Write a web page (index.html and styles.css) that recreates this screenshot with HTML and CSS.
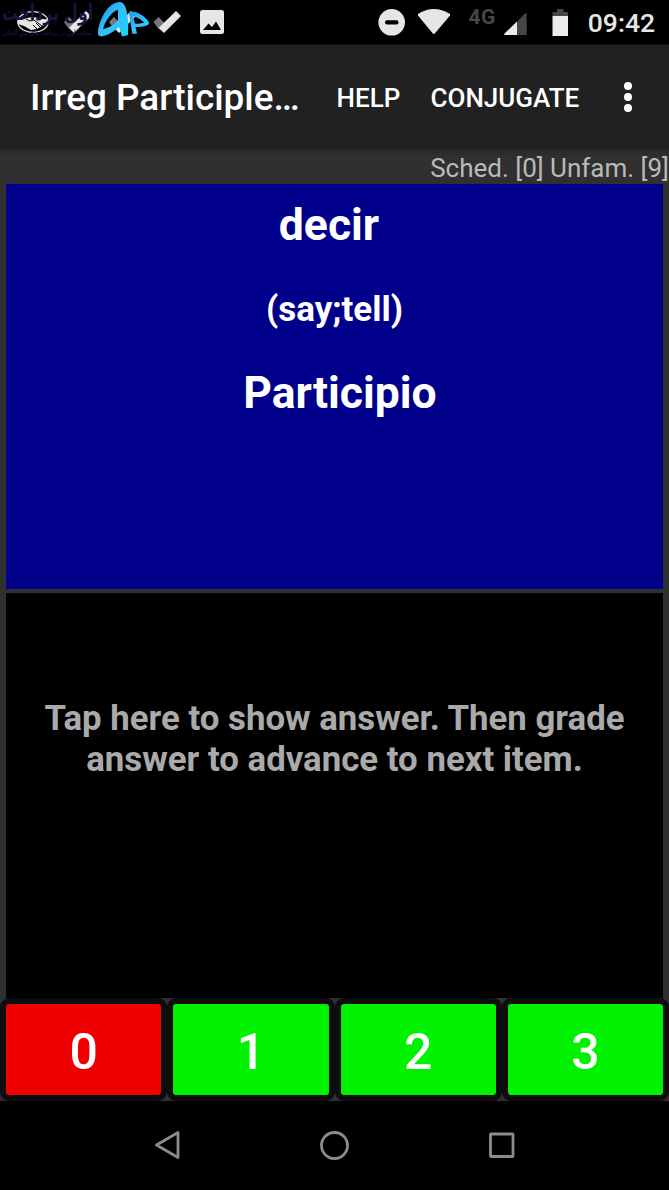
FILE: index.html
```
<!DOCTYPE html>
<html lang="en">
<head>
	<meta charset="UTF-8">
	<title>Irreg Participle</title>
	<link rel="stylesheet" href="styles.css">
</head>
<body>
	<div id="status">
		<svg class="icons" width="669" height="44" viewBox="0 0 669 44">
			<!-- handshake -->
			<ellipse cx="33" cy="22" rx="15.2" ry="10.3" fill="none" stroke="#e6e6e6" stroke-width="1.3"/>
			<path d="M18 19 Q23 20 27 18 L32 17 L39 18 Q44 20 48 19 L48 24 L42 26 L37 29 L31 30 L24 26 L18 24Z" fill="#e6e6e6"/>
			<path d="M26 19 L30 21 L34 20 L42 26 M33 25 L37 29 M36 23 L40 27" fill="none" stroke="#000" stroke-width="1"/>
			<!-- checks -->
			<g id="checks">
				<path d="M64 22 L69 17 L75 23 L69 29Z" fill="#777"/>
				<path d="M69 28 L86 11 L91 16 L74 33Z" fill="#e6e6e6"/>
				<path d="M109 22 L114 17 L120 23 L114 29Z" fill="#777"/>
				<path d="M114 28 L131 11 L136 16 L119 33Z" fill="#e6e6e6"/>
				<path d="M153.500 22 L158.500 17 L164.500 23 L158.500 29Z" fill="#777"/>
				<path d="M158.500 28 L176 11 L181 16 L164 33Z" fill="#e6e6e6"/>
			</g>
			<!-- picture -->
			<rect x="200" y="10" width="24" height="24" rx="2.500" fill="#e6e6e6"/>
			<path d="M203 30 L208.500 23.500 L212 27 L216 21.500 L221 30Z" fill="#000"/>
			<!-- do not disturb -->
			<circle cx="391.700" cy="22.300" r="13.300" fill="#e6e6e6"/>
			<rect x="385" y="20.300" width="13.500" height="4.200" rx="2" fill="#000"/>
			<!-- wifi -->
			<path d="M418 14 Q433.800 4 450 14 L450 15.500 L435 33.300 Q433.800 34.700 432.600 33.300 L418 15.500Z" fill="#e6e6e6"/>
			<!-- signal -->
			<path d="M525.500 13 Q526.700 12.500 526.700 14 V35 H517 V21.500Z" fill="#464646"/>
			<path d="M517 21.500 V35 H505 Q503.500 34.500 504.500 33.500Z" fill="#ececec"/>
			<!-- battery -->
			<path d="M552.500 16 V12 H557 V9 H563.500 V12 H568 V16Z" fill="#464646"/>
			<rect x="552.500" y="16" width="15.500" height="20" fill="#ececec"/>
			<!-- watermark -->
			<g class="mark" lang="fa">
				<text x="2" y="20" font-size="22" textLength="91" lengthAdjust="spacingAndGlyphs">اول پرداخت</text>
				<text x="2" y="34.500" font-size="7" textLength="91" lengthAdjust="spacingAndGlyphs">انتخاب اول در پرداخت های بین المللی</text>
			</g>
		</svg>
		<svg class="mark-logo" width="56" height="38" viewBox="96 1 56 38">
			<defs>
				<linearGradient id="blue" x1="0" y1="0" x2="1" y2="1">
					<stop offset="0" stop-color="#159bf0"/>
					<stop offset="0.500" stop-color="#35bdfa"/>
					<stop offset="1" stop-color="#19d7ff"/>
				</linearGradient>
			</defs>
			<path fill="url(#blue)" fill-rule="evenodd" d="M98 32 C99 20 108 2 120 2 C126 2.500 127 12 128 20 C128.500 27 128 31 128 35 L122 36.500 L119 27 C114 31 108 36 101 36.500 Q97.500 36 98 32Z M103 29 C109 28 115 24 118 20 L118 10 C112 11 105 21 103 29Z"/>
			<path fill="url(#blue)" fill-rule="evenodd" d="M129 13 C131 9 144 14 149 22.500 C150 26 142 27 135.500 27 L137 33.500 L132.500 34 C131 28 130 19 129 13Z M133 16.500 L135 23.500 C139 24 142 23.500 144 22.500 C141 19 137 17 133 16.500Z"/>
		</svg>
		<span class="net">4G</span>
		<span class="time">09:42</span>
	</div>
	<div id="bar">
		<h1>Irreg Participle…</h1>
		<a class="help">HELP</a>
		<a class="conj">CONJUGATE</a>
		<svg class="more" width="10" height="32" viewBox="0 0 10 32">
			<circle cx="5" cy="5" r="4"/>
			<circle cx="5" cy="16" r="4"/>
			<circle cx="5" cy="27" r="4"/>
		</svg>
	</div>
	<div id="main">
		<div class="sched">Sched. [0] Unfam. [9]</div>
		<div class="card question">
			<p class="verb">decir&nbsp;</p>
			<p class="meaning">(say;tell)</p>
			<p class="tense">&nbsp;Participio</p>
		</div>
		<div class="card answer">
			<p>Tap here to show answer. Then grade<br>answer to advance to next item.</p>
		</div>
		<div id="grades">
			<button class="wrong">0</button>
			<button>1</button>
			<button>2</button>
			<button>3</button>
		</div>
	</div>
	<div id="nav">
		<svg width="30" height="32" viewBox="0 0 30 32"><path d="M4.500 16 L26 3.500 V28.500Z"/></svg>
		<svg width="30" height="32" viewBox="0 0 30 32"><circle cx="15.500" cy="16.500" r="13"/></svg>
		<svg width="30" height="32" viewBox="0 0 30 32"><rect x="3.500" y="5" width="22.500" height="22.500" rx="0.500"/></svg>
	</div>
</body>
</html>
```
FILE: styles.css
```
*{
	margin: 0;
	padding: 0;
	box-sizing: border-box;
}
body{
	width: 669px;
	height: 1190px;
	background: #000;
	color: #fff;
	font-family: Roboto, "Noto Sans", sans-serif;
	overflow: hidden;
}
#status{
	position: relative;
	height: 45px;
	background: #000;
	display: flex;
	justify-content: flex-end;
	border-bottom: 1px solid #111;
}
#status .icons{
	position: absolute;
	left: 0;
	top: 0;
}
.mark{
	fill: #15153f;
	font-family: "DejaVu Sans", sans-serif;
	font-weight: 700;
}
.mark-logo{
	position: absolute;
	left: 96px;
	top: 1px;
}
.net{
	color: #464646;
	font-size: 21px;
	font-weight: 700;
	line-height: 34px;
	letter-spacing: 0.5px;
	margin-right: 92px;
}
.time{
	color: #e6e6e6;
	font-size: 26.5px;
	font-weight: 500;
	line-height: 46px;
	margin-right: 14px;
}
#bar{
	position: relative;
	height: 104px;
	padding: 0 36px 0 30px;
	display: flex;
	align-items: center;
	background: #212121;
	box-shadow: 0 1px 6px rgba(0,0,0,0.4);
}
#bar h1{
	width: 306.5px;
	font-size: 36.9px;
	font-weight: 500;
	line-height: 104px;
	white-space: nowrap;
	padding-top: 2px;
}
#bar a{
	font-size: 26px;
	font-weight: 500;
	white-space: nowrap;
	padding-top: 2px;
}
#bar .help{
	width: 94px;
}
#bar .more{
	margin-left: auto;
	fill: #fff;
}
#main{
	height: 952px;
	background: #303030;
}
.sched{
	height: 35px;
	color: #bababa;
	font-size: 26px;
	line-height: 38px;
	text-align: right;
}
.card{
	height: 405px;
	margin: 0 6px;
	text-align: center;
	font-weight: 700;
}
.question{
	background: #00008b;
	padding-top: 13px;
	margin-bottom: 4px;
}
.question p{
	line-height: 56px;
	margin-bottom: 28px;
}
.verb, .tense{
	font-size: 44.5px;
}
.question .meaning{
	font-size: 35px;
	padding-top: 1px;
	margin-bottom: 27px;
}
.answer{
	background: #000;
	color: #aaa;
	padding-top: 105px;
	font-size: 34.8px;
	line-height: 41px;
}
#grades{
	height: 103px;
	display: flex;
}
#grades button{
	flex: 1;
	padding-top: 4px;
	border: 6px solid #0d0d0d;
	border-radius: 9px;
	background: #00f200;
	color: #fff;
	font-family: Roboto, sans-serif;
	font-size: 50px;
	font-weight: 500;
}
#grades .wrong{
	background: #f00000;
}
#nav{
	height: 89px;
	padding: 0 152.5px 1px 152px;
	display: flex;
	justify-content: space-between;
	align-items: center;
}
#nav svg{
	fill: none;
	stroke: #8c8c8c;
	stroke-width: 2.8;
	stroke-linejoin: round;
}
```
